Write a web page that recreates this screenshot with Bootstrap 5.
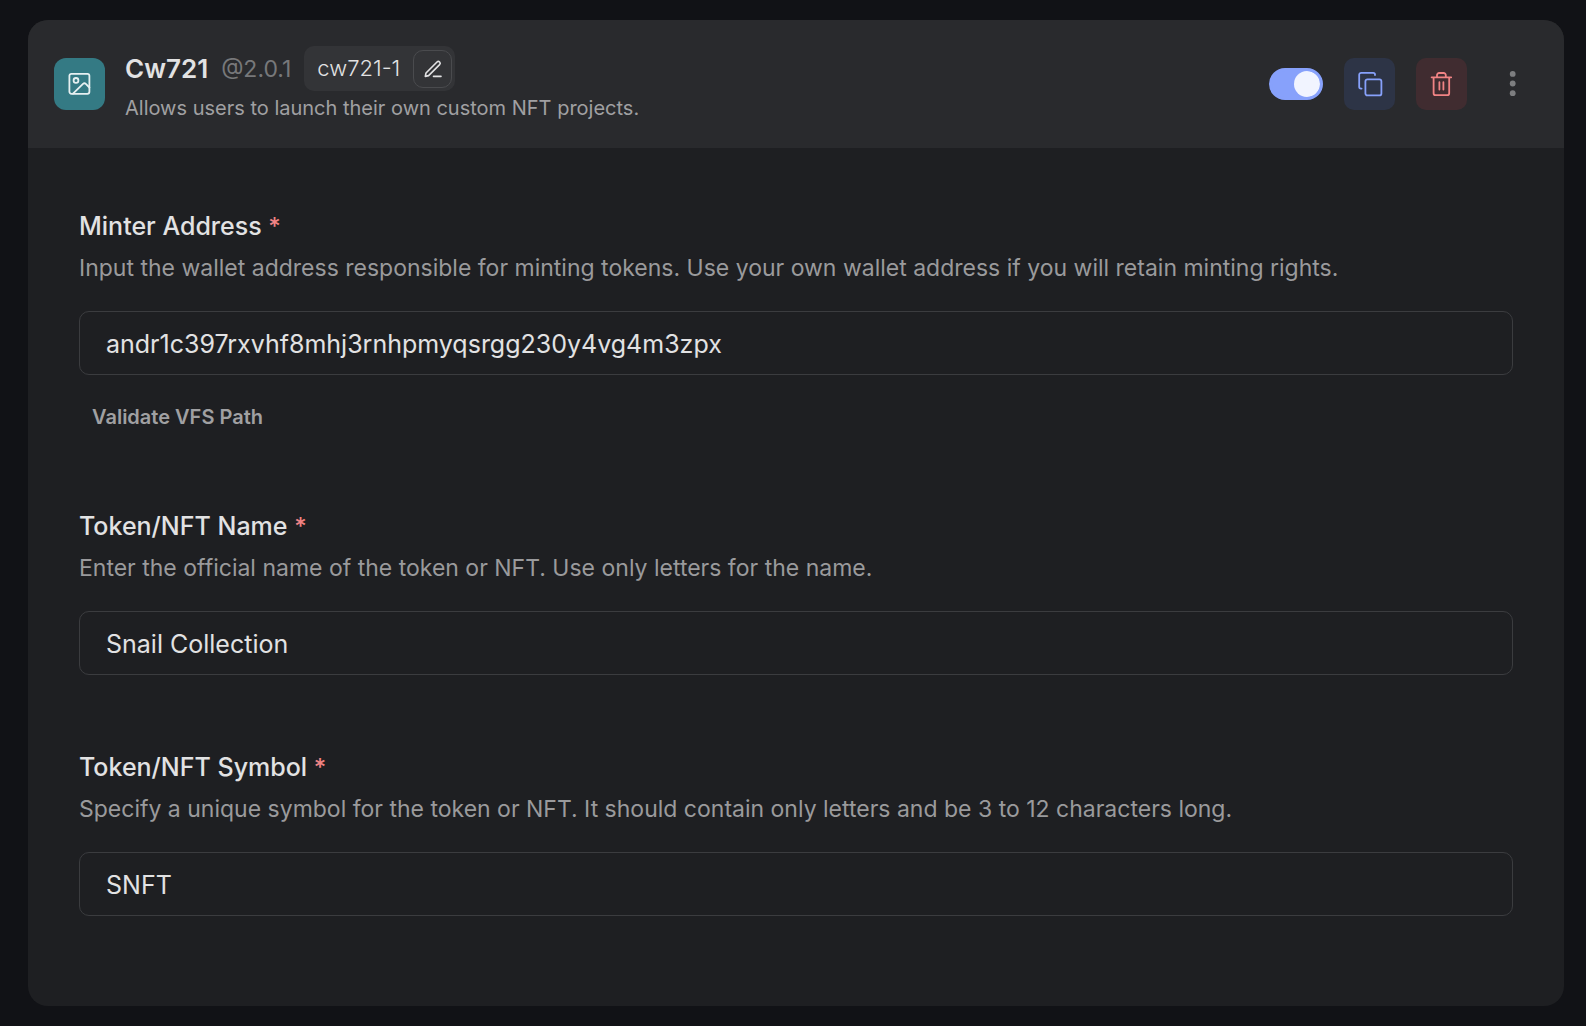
<!DOCTYPE html>
<html lang="en" data-bs-theme="dark">
<head>
<meta charset="utf-8">
<meta name="viewport" content="width=device-width, initial-scale=1">
<title>Cw721</title>
<link href="https://cdn.jsdelivr.net/npm/bootstrap@5.3.0/dist/css/bootstrap.min.css" rel="stylesheet">
<style>
  body { background: #111216; color: #e2e2e3; font-family: Inter, "Liberation Sans", sans-serif; }
  .page { padding: 20px 22px 21px 28px; }
  .module { background: #1e1f22; border-radius: 20px; }
  .module-head { background: #292a2d; padding: 26px; gap: 20px; }
  .tile { width: 51px; height: 52px; border-radius: 10px; padding: 0; border: 0; flex: none; }
  .tile-teal { background: #347a84; color: #e6f0f1; border-radius: 12px; }
  .tile-blue { background: #2d3446; color: #87a1fb; }
  .tile-red { background: #402c30; color: #f08384; }
  .tile-plain { width: 50px; background: none; color: #7d7e80; }
  .title-row { gap: 13px; }
  .module-title { font-size: 26px; line-height: 32px; font-weight: 600; color: #e2e2e3; }
  .version { font-size: 23px; line-height: 32px; color: #77787a; }
  .name-pill { background: #333437; border-radius: 10px; height: 45px; padding: 0 3px 0 13px; gap: 13px; font-size: 22px; font-weight: 300; }
  .edit-btn { width: 39px; height: 38px; border: 1px solid #4a4b4e; border-radius: 10px; background: none; color: #e2e2e3; padding: 0; }
  .summary { font-size: 20px; line-height: 28px; margin: 3px 0 0; color: #a0a0a2; }
  .head-actions { gap: 21px; }
  .form-switch.toggle { padding: 0; min-height: 0; }
  .form-switch.toggle .form-check-input {
    width: 54px; height: 32px; margin: 0; border: 3px solid #87a1fb; float: none; display: block;
    background-color: #87a1fb; background-size: contain; background-origin: content-box;
    background-image: url("data:image/svg+xml,%3csvg xmlns='http://www.w3.org/2000/svg' viewBox='-4 -4 8 8'%3e%3ccircle r='4' fill='%23f1f4ff'/%3e%3c/svg%3e");
  }
  .module-body { padding: 62px 51px 90px; gap: 76px; }
  .field-label { font-size: 25px; line-height: 32px; font-weight: 500; margin-bottom: 10px; }
  .required { color: #f08384; font-size: 24px; line-height: 1; }
  .field-help { font-size: 23px; line-height: 32px; color: #9a9a9c; margin-bottom: 27px; }
  .field-input, .field-input:focus { height: 64px; background: transparent; border: 1px solid #3b3c3f; border-radius: 10px; padding: 2px 26px 0; font-size: 25px; color: #e2e2e3; }
  .validate { margin-top: 24px; height: 35px; padding: 0 13px; border: 0; font-size: 20px; line-height: 34px; font-weight: 600; color: #a0a0a2; }
</style>
<script src="https://cdn.jsdelivr.net/npm/bootstrap@5.3.0/dist/js/bootstrap.bundle.min.js"></script>
</head>
<body>
<main class="page">
  <section class="module overflow-hidden">
    <header class="module-head d-flex align-items-center">
      <div class="tile tile-teal d-flex align-items-center justify-content-center">
        <svg width="26" height="26" viewBox="0 0 26 26" fill="none" stroke="currentColor" stroke-width="1.8" stroke-linecap="round" stroke-linejoin="round" aria-hidden="true"><rect x="2.4" y="2.8" width="20" height="20" rx="2"/><circle cx="9" cy="9.4" r="2.4"/><path d="M6 22.6 16 12.9a2 2 0 0 1 2.8 0l3.6 3.6"/></svg>
      </div>
      <div class="flex-grow-1">
        <div class="title-row d-flex align-items-center">
          <h1 class="module-title m-0">Cw721</h1>
          <span class="version">@2.0.1</span>
          <div class="name-pill d-flex align-items-center">
            <span>cw721-1</span>
            <button type="button" class="edit-btn d-flex align-items-center justify-content-center" aria-label="Edit name">
              <svg width="20" height="20" viewBox="0 0 20 20" fill="none" stroke="currentColor" stroke-width="1.6" stroke-linecap="round" stroke-linejoin="round" aria-hidden="true"><path d="M2.3 17.4 3 14 14 3a1.8 1.8 0 0 1 2.6 2.6l-11 11zM10.5 17.4h7.5"/></svg>
            </button>
          </div>
        </div>
        <p class="summary">Allows users to launch their own custom NFT projects.</p>
      </div>
      <div class="head-actions d-flex align-items-center">
        <div class="form-check form-switch toggle m-0">
          <input class="form-check-input" type="checkbox" role="switch" aria-label="Enable module" checked>
        </div>
        <button type="button" class="tile tile-blue d-flex align-items-center justify-content-center" aria-label="Duplicate">
          <svg width="26" height="26" viewBox="0 0 26 26" fill="none" stroke="currentColor" stroke-width="1.8" stroke-linecap="round" stroke-linejoin="round" aria-hidden="true"><rect x="8.4" y="8.4" width="16" height="16" rx="2"/><path d="M4.6 17.6H4A1.8 1.8 0 0 1 2.2 15.8V3.8A2 2 0 0 1 4.2 1.8h12A1.8 1.8 0 0 1 18 3.6V4"/></svg>
        </button>
        <button type="button" class="tile tile-red d-flex align-items-center justify-content-center" aria-label="Delete">
          <svg width="26" height="26" viewBox="0 0 26 26" fill="none" stroke="currentColor" stroke-width="1.8" stroke-linecap="round" stroke-linejoin="round" aria-hidden="true"><path d="M2.6 6.3h19.6M4.6 6.3v15.9a2 2 0 0 0 2 2h11.6a2 2 0 0 0 2-2V6.3M8 6.3V4.2A2.2 2.2 0 0 1 10.2 2h4.4a2.2 2.2 0 0 1 2.2 2.2v2.1M10.4 11.2v7.4M14.4 11.2v7.4"/></svg>
        </button>
        <button type="button" class="tile tile-plain d-flex align-items-center justify-content-center" aria-label="More options">
          <svg width="26" height="26" viewBox="0 0 26 26" fill="currentColor" aria-hidden="true"><circle cx="12.7" cy="2.9" r="2.9"/><circle cx="12.7" cy="12.5" r="2.9"/><circle cx="12.7" cy="22.2" r="2.9"/></svg>
        </button>
      </div>
    </header>
    <form class="module-body d-flex flex-column">
      <div>
        <label class="field-label d-block" for="minter">Minter Address <span class="required">*</span></label>
        <p class="field-help">Input the wallet address responsible for minting tokens. Use your own wallet address if you will retain minting rights.</p>
        <input class="form-control field-input" id="minter" type="text" value="andr1c397rxvhf8mhj3rnhpmyqsrgg230y4vg4m3zpx">
        <button type="button" class="btn validate d-block">Validate VFS Path</button>
      </div>
      <div>
        <label class="field-label d-block" for="token-name">Token/NFT Name <span class="required">*</span></label>
        <p class="field-help">Enter the official name of the token or NFT. Use only letters for the name.</p>
        <input class="form-control field-input" id="token-name" type="text" value="Snail Collection">
      </div>
      <div>
        <label class="field-label d-block" for="token-symbol">Token/NFT Symbol <span class="required">*</span></label>
        <p class="field-help">Specify a unique symbol for the token or NFT. It should contain only letters and be 3 to 12 characters long.</p>
        <input class="form-control field-input" id="token-symbol" type="text" value="SNFT">
      </div>
    </form>
  </section>
</main>
</body>
</html>
